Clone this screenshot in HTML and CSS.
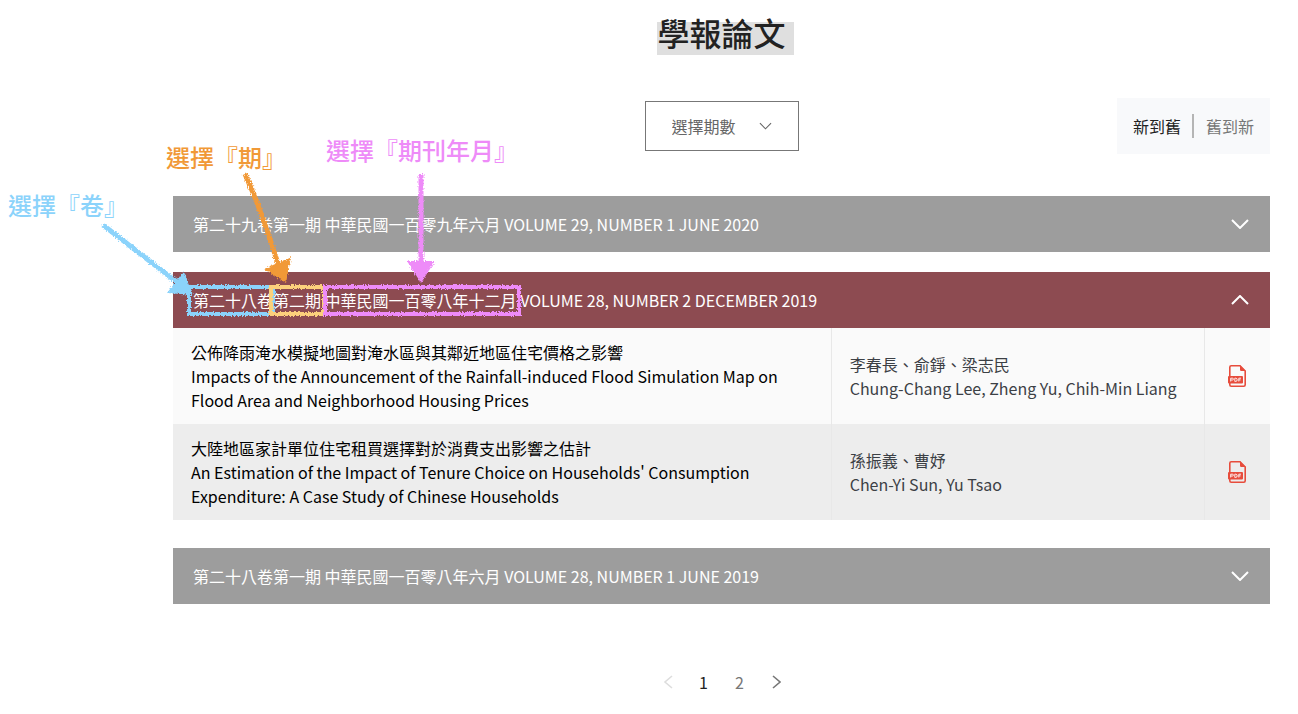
FILE: index.html
```html
<!DOCTYPE html>
<html lang="zh-Hant">
<head>
<meta charset="utf-8">
<meta name="viewport" content="width=device-width, initial-scale=1">
<title>學報論文</title>
<link rel="stylesheet" href="styles.css">
</head>
<body>
<main class="page">
  <h1 class="title"><span class="title-text">學報論文</span></h1>

  <div class="toolbar">
    <div class="picker">
      <select class="picker-select" aria-label="選擇期數">
        <option>選擇期數</option>
      </select>
      <svg class="picker-arrow" viewBox="0 0 14 8" aria-hidden="true"><path d="M1 1l6 6 6-6"/></svg>
    </div>
    <div class="sort">
      <button class="sort-option sort-option-active" type="button">新到舊</button>
      <button class="sort-option" type="button">舊到新</button>
    </div>
  </div>

  <section class="issue">
    <button class="issue-header" type="button" aria-expanded="false">
      <span>第二十九卷第一期 中華民國一百零九年六月 VOLUME 29, NUMBER 1 JUNE 2020</span>
      <svg class="chevron" viewBox="0 0 18 10" aria-hidden="true"><path d="M1 1l8 8 8-8"/></svg>
    </button>
  </section>

  <section class="issue issue-open">
    <button class="issue-header" type="button" aria-expanded="true">
      <span>第二十八卷第二期 中華民國一百零八年十二月 VOLUME 28, NUMBER 2 DECEMBER 2019</span>
      <svg class="chevron" viewBox="0 0 18 10" aria-hidden="true"><path d="M1 9l8-8 8 8"/></svg>
    </button>
    <table class="papers">
      <tbody>
        <tr>
          <td class="paper-title">公佈降雨淹水模擬地圖對淹水區與其鄰近地區住宅價格之影響<br>Impacts of the Announcement of the Rainfall-induced Flood Simulation Map on Flood Area and Neighborhood Housing Prices</td>
          <td class="paper-authors">李春長、俞錚、梁志民<br>Chung-Chang Lee, Zheng Yu, Chih-Min Liang</td>
          <td class="paper-file"><a class="pdf-link" href="#" aria-label="PDF"><svg class="pdf-icon" viewBox="0 0 18 22" aria-hidden="true"><path class="pdf-page" d="M1.800 11V2.300Q1.800 .8 3.200 .8H12L17.200 6V19.800Q17.200 21.200 15.800 21.200H3.200Q1.800 21.200 1.800 19.800V18"/><path class="pdf-fill" d="M12 .3V4.800Q12 6 13.200 6H17.800zM1 11H14Q15 11 15 12V17.500Q15 18.500 14 18.500H1Q0 18.500 0 17.500V12Q0 11 1 11z"/><path class="pdf-mark" d="M2.700 16.500V13.200H4.500Q5.400 13.200 5.400 14.100T4.500 15H2.700M6.800 16.400V13.200H7.800Q9.200 13.200 9.200 14.800T7.800 16.400zM10.800 16.500V13.200H13M10.800 14.900H12.600"/></svg></a></td>
        </tr>
        <tr>
          <td class="paper-title">大陸地區家計單位住宅租買選擇對於消費支出影響之估計<br>An Estimation of the Impact of Tenure Choice on Households' Consumption Expenditure: A Case Study of Chinese Households</td>
          <td class="paper-authors">孫振義、曹妤<br>Chen-Yi Sun, Yu Tsao</td>
          <td class="paper-file"><a class="pdf-link" href="#" aria-label="PDF"><svg class="pdf-icon" viewBox="0 0 18 22" aria-hidden="true"><path class="pdf-page" d="M1.800 11V2.300Q1.800 .8 3.200 .8H12L17.200 6V19.800Q17.200 21.200 15.800 21.200H3.200Q1.800 21.200 1.800 19.800V18"/><path class="pdf-fill" d="M12 .3V4.800Q12 6 13.200 6H17.800zM1 11H14Q15 11 15 12V17.500Q15 18.500 14 18.500H1Q0 18.500 0 17.500V12Q0 11 1 11z"/><path class="pdf-mark" d="M2.700 16.500V13.200H4.500Q5.400 13.200 5.400 14.100T4.500 15H2.700M6.800 16.400V13.200H7.800Q9.200 13.200 9.200 14.800T7.800 16.400zM10.800 16.500V13.200H13M10.800 14.900H12.600"/></svg></a></td>
        </tr>
      </tbody>
    </table>
  </section>

  <section class="issue">
    <button class="issue-header" type="button" aria-expanded="false">
      <span>第二十八卷第一期 中華民國一百零八年六月 VOLUME 28, NUMBER 1 JUNE 2019</span>
      <svg class="chevron" viewBox="0 0 18 10" aria-hidden="true"><path d="M1 1l8 8 8-8"/></svg>
    </button>
  </section>

  <nav class="pager" aria-label="分頁">
    <a class="pager-item pager-disabled" href="#" aria-label="上一頁"><svg class="pager-arrow" viewBox="0 0 10 14" aria-hidden="true"><path d="M9 1L2 7l7 6"/></svg></a>
    <a class="pager-item pager-current" href="#" aria-current="page">1</a>
    <a class="pager-item" href="#">2</a>
    <a class="pager-item" href="#" aria-label="下一頁"><svg class="pager-arrow" viewBox="0 0 10 14" aria-hidden="true"><path d="M2 1l7 6-7 6"/></svg></a>
  </nav>
</main>

<svg class="marks" width="560" height="340" viewBox="0 0 560 340" aria-hidden="true">
  <defs>
    <filter id="crayon" filterUnits="userSpaceOnUse" x="0" y="0" width="560" height="340" color-interpolation-filters="sRGB">
      <feTurbulence type="fractalNoise" baseFrequency="0.7" numOctaves="2" seed="4" result="noise"/>
      <feDisplacementMap in="SourceGraphic" in2="noise" scale="4" xChannelSelector="R" yChannelSelector="G"/>
    </filter>
  </defs>
  <g filter="url(#crayon)">
    <g class="mark-blue">
      <rect class="mark-box" x="189" y="287" width="84" height="27"/>
      <path class="mark-line" d="M103 225L178 283"/>
      <path class="mark-head" d="M184 271L167 293L193 295z"/>
    </g>
    <g class="mark-orange">
      <path class="mark-line" d="M245 174Q262 212 278 264"/>
      <path class="mark-head" d="M291 257L264 269L286 283z"/>
    </g>
    <g class="mark-yellow">
      <rect class="mark-box" x="271" y="287" width="53" height="27"/>
    </g>
    <g class="mark-pink">
      <rect class="mark-box" x="325" y="287" width="194" height="27"/>
      <path class="mark-line" d="M421 174L421 264"/>
      <path class="mark-head" d="M407 261L435 261L421 283z"/>
    </g>
  </g>
</svg>
<p class="note note-volume">選擇『卷』</p>
<p class="note note-number">選擇『期』</p>
<p class="note note-date">選擇『期刊年月』</p>
</body>
</html>
```

FILE: styles.css
```css
* {
  box-sizing: border-box;
}

body {
  position: relative;
  margin: 0;
  background: #fff;
  color: #000;
  font: 16px/24px "Noto Sans CJK TC", sans-serif;
}

button,
select {
  font: inherit;
}

a {
  color: inherit;
  text-decoration: none;
}

.page {
  padding: 8px 28px 0 173px;
}

.title {
  margin: 0;
  font-size: 32px;
  line-height: 48px;
  font-weight: 500;
  color: #222;
  text-align: center;
}

.title-text {
  position: relative;
  display: inline-block;
}

.title-text::before {
  content: "";
  position: absolute;
  z-index: -1;
  top: 14px;
  right: -8px;
  bottom: 1px;
  left: 0;
  background: #dfdfdf;
}

.toolbar {
  display: grid;
  grid-template-columns: 1fr auto 1fr;
  align-items: center;
  margin: 42px 0;
}

.picker {
  position: relative;
  grid-column: 2;
}

.picker-select {
  appearance: none;
  display: block;
  width: 154px;
  height: 50px;
  padding: 0 26px;
  border: 1px solid #777;
  border-radius: 0;
  background: #fff;
  color: #666;
}

.picker-arrow {
  position: absolute;
  top: 21px;
  right: 27px;
  width: 13px;
  height: 8px;
  fill: none;
  stroke: #666;
  stroke-width: 1.2;
  pointer-events: none;
}

.sort {
  display: flex;
  justify-self: end;
  padding: 16px 4px;
  background: #f8f9fb;
}

.sort-option {
  padding: 0 12px;
  border: 0;
  background: none;
  color: #777;
}

.sort-option-active {
  padding-right: 11px;
  border-right: 2px solid #b5b5b5;
  color: #222;
}

.issue {
  margin-bottom: 20px;
}

.issue-open {
  margin-bottom: 28px;
}

.issue-header {
  display: flex;
  align-items: center;
  justify-content: space-between;
  width: 100%;
  padding: 16px 21px 16px 20px;
  border: 0;
  background: #9d9d9d;
  color: #fff;
  text-align: left;
}

.issue-open .issue-header {
  background: #8d4b51;
}

.chevron {
  flex: none;
  width: 18px;
  height: 10px;
  fill: none;
  stroke: #fff;
  stroke-width: 2;
}

.papers {
  width: 100%;
  border-collapse: collapse;
  table-layout: fixed;
}

.papers tr {
  background: #fafafa;
}

.papers tr:nth-child(even) {
  background: #ededed;
}

.papers td {
  padding: 12px 18px;
  vertical-align: middle;
}

.papers .paper-title {
  width: 60%;
}

.papers .paper-authors {
  width: 34%;
  border: solid #e8e8e8;
  border-width: 0 1px;
  color: #3c4045;
}

.papers .paper-file {
  width: 6%;
  padding: 0;
}

.pdf-link {
  display: flex;
  justify-content: center;
}

.pdf-icon {
  width: 18px;
  height: 22px;
}

.pdf-page {
  fill: none;
  stroke: #e74c3c;
  stroke-width: 1.6;
}

.pdf-fill {
  fill: #e74c3c;
}

.pdf-mark {
  fill: none;
  stroke: #fff;
  stroke-width: 0.9;
}

.pager {
  display: flex;
  justify-content: center;
  gap: 12px;
  margin-top: 66px;
}

.pager-item {
  display: flex;
  align-items: center;
  justify-content: center;
  width: 24px;
  height: 24px;
  color: #777;
}

.pager-current {
  color: #222;
}

.pager-disabled {
  color: #ddd;
}

.pager-arrow {
  width: 10px;
  height: 14px;
  fill: none;
  stroke: currentColor;
  stroke-width: 1.6;
}

.marks {
  position: absolute;
  top: 0;
  left: 0;
  pointer-events: none;
}

.mark-blue {
  color: #8bd3fb;
}

.mark-yellow {
  color: #fbd07c;
}

.mark-orange {
  color: #f19937;
}

.mark-pink {
  color: #ee8bf8;
}

.mark-box {
  fill: none;
  stroke: currentColor;
  stroke-width: 4;
}

.mark-line {
  fill: none;
  stroke: currentColor;
  stroke-width: 5;
}

.mark-head {
  fill: currentColor;
}

.note {
  position: absolute;
  margin: 0;
  font-size: 24px;
  line-height: 36px;
  font-weight: 500;
  white-space: nowrap;
}

.note-volume {
  top: 187px;
  left: 8px;
  color: #8bd3fb;
}

.note-number {
  top: 139px;
  left: 166px;
  color: #f19937;
}

.note-date {
  top: 132px;
  left: 326px;
  color: #ee8bf8;
}
```
